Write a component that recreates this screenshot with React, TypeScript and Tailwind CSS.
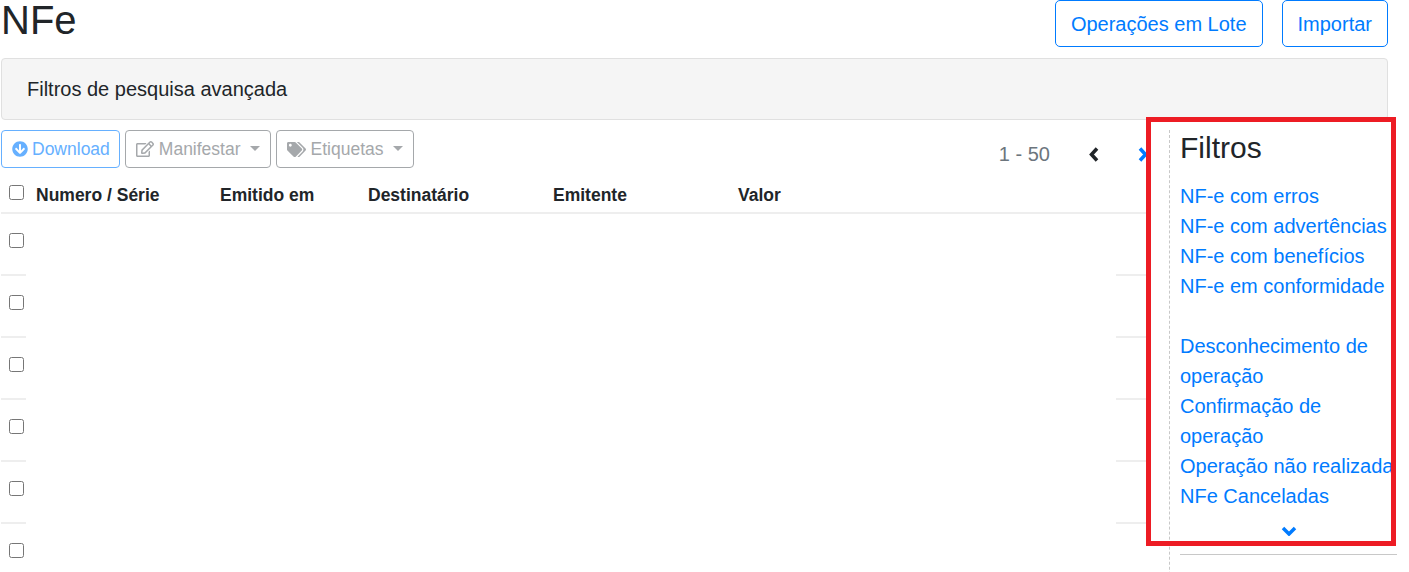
import { FaArrowCircleDown, FaRegEdit, FaTags } from 'react-icons/fa'

const columns = [
  { label: 'Numero / Série', width: 'w-[184px]' },
  { label: 'Emitido em', width: 'w-[148px]' },
  { label: 'Destinatário', width: 'w-[185px]' },
  { label: 'Emitente', width: 'w-[185px]' },
  { label: 'Valor', width: 'w-[100px]' },
]

const links = [
  'NF-e com erros',
  'NF-e com advertências',
  'NF-e com benefícios',
  'NF-e em conformidade',
]

const links2 = [
  'Desconhecimento de operação',
  'Confirmação de operação',
  'Operação não realizada',
  'NFe Canceladas',
]

const Caret = () => (
  <span className="relative -top-[1px] ml-[4px] inline-block h-0 w-0 border-x-[5px] border-t-[5px] border-x-transparent border-t-[#a5a8ab]" />
)

const Row = () => (
  <div className="flex h-[62px] pl-[8px] pt-[19px]">
    <input type="checkbox" className="h-[15px] w-[15px]" />
  </div>
)

export default function App() {
  return (
    <div className="relative h-[572px] w-[1409px] overflow-hidden bg-white font-['Liberation_Sans',Arial,sans-serif] text-[20px] text-[#212529]">
      <header className="flex h-[58px] items-start justify-between pl-[1px] pr-[21px]">
        <h1 className="text-[40px] leading-[40px]">NFe</h1>
        <div className="flex gap-[19px]">
          <button className="h-[47px] rounded-[5px] border border-[#007bff] px-[15px] text-[#007bff]">Operações em Lote</button>
          <button className="h-[47px] rounded-[5px] border border-[#007bff] px-[15px] text-[#007bff]">Importar</button>
        </div>
      </header>

      <div className="ml-[1px] mr-[21px] flex h-[62px] items-center rounded-[4px] border border-[#e0e0e0] bg-[#f5f5f5] pl-[25px]">
        Filtros de pesquisa avançada
      </div>

      <div className="flex">
        <main className="w-[1146px] shrink-0 pl-[1px]">
          <div className="mt-[10px] flex h-[38px] gap-[5px] text-[17.5px]">
            <button className="flex items-center gap-[4px] rounded-[4px] border border-[#66b0ff] pl-[10px] pr-[9px] text-[#66b0ff]">
              <FaArrowCircleDown size={16} />
              Download
            </button>
            <button className="flex items-center gap-[5px] rounded-[4px] border border-[#a5a8ab] px-[10px] text-[#a5a8ab]">
              <FaRegEdit size={18} />
              Manifestar
              <Caret />
            </button>
            <button className="flex items-center gap-[5px] rounded-[4px] border border-[#a5a8ab] px-[10px] text-[#a5a8ab]">
              <FaTags size={19} />
              Etiquetas
              <Caret />
            </button>
            <div className="-mr-[2px] ml-auto flex items-center pt-[10px]">
              <span className="text-[20px] text-[#6c757d]">1 - 50</span>
              <svg width="10" height="15" viewBox="0 0 10 15" className="ml-[39px] text-[#212529]">
                <path d="M8 1.5 L2.5 7.5 L8 13.5" fill="none" stroke="currentColor" strokeWidth="3.5" />
              </svg>
              <svg width="10" height="15" viewBox="0 0 10 15" className="ml-[39px] text-[#007bff]">
                <path d="M2 1.5 L7.5 7.5 L2 13.5" fill="none" stroke="currentColor" strokeWidth="3.5" />
              </svg>
            </div>
          </div>

          <div className="mt-[8px] flex h-[38px] items-center border-b-2 border-[#eeeeee] pl-[8px] pt-[2px] text-[17.5px]">
            <input type="checkbox" className="relative -top-[3px] h-[15px] w-[15px]" />
            <div className="ml-[12px] flex font-bold text-[#212529]">
              {columns.map(c => (
                <div key={c.label} className={c.width}>{c.label}</div>
              ))}
            </div>
          </div>

          {[0, 1, 2, 3, 4, 5].map(i => (
            <div key={i} className="relative">
              <Row />
              <div className="absolute bottom-0 left-0 h-[2px] w-[25px] bg-[#eeeeee]" />
              <div className="absolute bottom-0 right-0 h-[2px] w-[30px] bg-[#eeeeee]" />
            </div>
          ))}
        </main>

        <aside className="ml-[23px] mt-[10px] h-[500px] w-[240px] border-l border-dashed border-[#c8c8c8] pl-[10px] pr-[12px]">
          <h2 className="mb-[15px] text-[30px] leading-[36px]">Filtros</h2>
          <div className="leading-[30px] text-[#007bff]">
            {links.map(l => <div key={l} className="whitespace-nowrap">{l}</div>)}
            <div className="h-[30px]" />
            {links2.map(l => <div key={l} className="w-[218px]">{l}</div>)}
          </div>
          <div className="flex justify-center pt-[15px]">
            <svg width="16" height="10" viewBox="0 0 16 10" className="text-[#007bff]">
              <path d="M2 2 L8 8 L14 2" fill="none" stroke="currentColor" strokeWidth="3.5" />
            </svg>
          </div>
          <div className="mt-[18px] border-t border-[#c8c8c8]" />
        </aside>
      </div>

      {/* annotation over the sidebar */}
      <div className="pointer-events-none absolute left-[1146px] top-[117px] h-[429px] w-[250px] border-[5px] border-[#ed1c24]" />
    </div>
  )
}
